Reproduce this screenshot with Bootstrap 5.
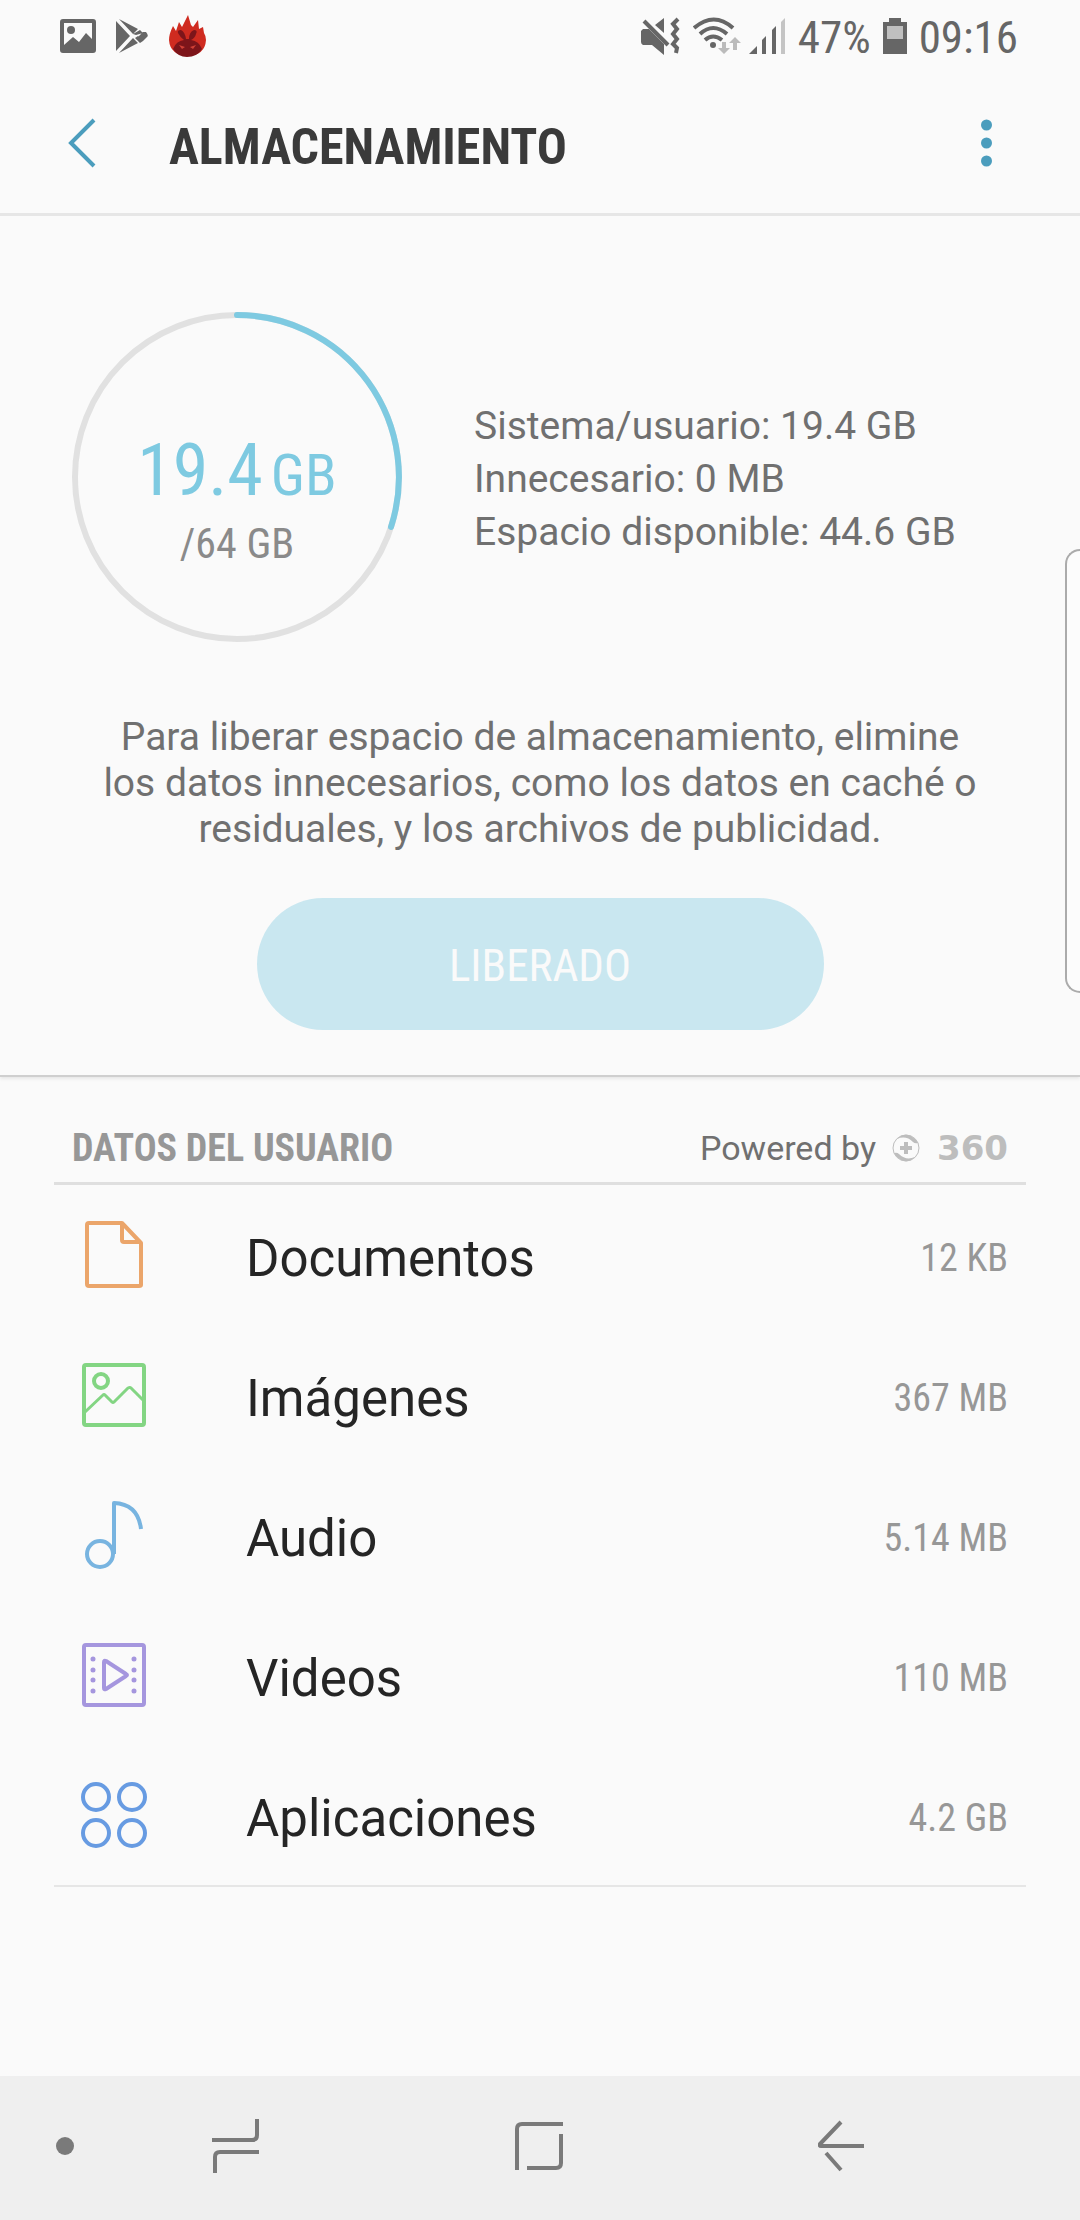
<!DOCTYPE html>
<html lang="es">
<head>
<meta charset="utf-8">
<meta name="viewport" content="width=device-width, initial-scale=1">
<title>Almacenamiento</title>
<link href="https://cdn.jsdelivr.net/npm/bootstrap@5.3.0/dist/css/bootstrap.min.css" rel="stylesheet">
<style>
  body { font-family: Roboto, "Liberation Sans", sans-serif; background: #fafafa; color: #707070; }
  .narrow { font-family: "Roboto Condensed", Roboto, "Liberation Sans", sans-serif; }
  svg { display: block; flex: none; }
  .bare { background: none; border: 0; padding: 0; }

  .statusbar { height: 72px; padding: 0 62px 0 60px; color: #666; font-size: 45px; line-height: 72px; }
  .statusbar span { padding-top: 4px; margin: 0 12px; }
  .statusbar span:last-child { margin-right: 0; }
  .notices { gap: 20px; }
  .signals { gap: 8px; }
  .topbar { height: 144px; padding: 0 88px 0 68px; border-bottom: 3px solid #e6e6e6; }
  .topbar h1 { font-size: 50px; line-height: 60px; color: #3a3a3a; margin-left: 73px; padding-top: 8px; }

  .summary { padding: 96px 72px 45px; border-bottom: 2px solid #cfcfcf; box-shadow: 0 2px 3px #e8e8e8; }
  .overview { gap: 72px; }
  .gauge { width: 330px; height: 330px; }
  .gauge-text { inset: 0; padding-top: 115px; text-align: center; }
  .used { font-size: 72px; line-height: 88px; color: #7ecae1; }
  .used-unit { font-size: 58px; margin-left: 8px; }
  .total { font-size: 42px; line-height: 50px; color: #8a8a8a; }
  .facts { font-size: 39px; line-height: 53px; padding-top: 4px; }
  .advice { font-size: 39px; line-height: 46px; margin-top: 72px; max-width: 890px; }
  .btn-free { width: 567px; height: 132px; margin-top: 46px; padding: 4px 0 0; border-radius: 66px; border: 0; font-size: 45px; }
  .btn-free:disabled { background: #c9e7f0; color: #fafafa; opacity: 1; }
  .edge-handle { right: 0; top: 333px; width: 15px; height: 444px; border: 2px solid #ababab; border-right: 0; border-radius: 22px 0 0 22px; background: #fcfcfc; }

  .userdata { margin: 0 54px; padding-top: 34px; }
  .section-head { height: 74px; padding: 2px 18px 0; border-bottom: 3px solid #dfdfdf; }
  .section-head h2 { font-size: 38px; line-height: 46px; color: #979797; }
  .powered { font-size: 34px; line-height: 40px; }
  .brand-name { font: bold 34px/40px "DejaVu Sans", sans-serif; color: #bdbdbd; width: 88px; text-align: right; }
  .category { height: 140px; padding: 0 18px 0 24px; color: #252525; font-size: 51px; line-height: 60px; }
  .category-name { margin-left: 96px; padding-top: 8px; }
  .category-size { font-size: 38px; color: #979797; padding-top: 6px; }
  .categories { border-bottom: 2px solid #e6e6e6; }

  .navkeys { height: 144px; background: #efefef; padding: 0 216px 4px 54px; gap: 136px; }
</style>
</head>
<body>
<div class="d-flex flex-column min-vh-100">

  <div class="statusbar narrow d-flex align-items-center justify-content-between">
    <div class="notices d-flex align-items-center">
      <svg width="36" height="34" viewBox="0 0 36 34"><path fill="#666" fill-rule="evenodd" d="M3 0h30q3 0 3 3v28q0 3-3 3H3q-3 0-3-3V3q0-3 3-3zm1 4v22l9-8 6 5 7-9 6 6V4z"/><circle cx="11" cy="11" r="4" fill="#666"/></svg>
      <svg width="33" height="36" viewBox="0 0 33 36"><path fill="#666" d="M0 3v30l14-15zM3 1l19 10-5 5zM3 35l19-10-5-5zM24 12l3 3-7 2-3-1zM24 25l-5-5 3-2 5 5zM27 14h3q3 4 1 5l-4 4-5-4z"/></svg>
      <svg width="37" height="42" viewBox="0 0 37 42"><path fill="#cf2b20" d="M4 11l3 5 3-9 3 5L19 0l3 10 2 2 5-7 1 9 4-2 1 6q2 3 2 7-1 15-18 16Q1 40 0 25q0-6 4-14z"/><path fill="#7d151a" d="M4 34q3-8 11-9-4-3-6-7-1-3 3-3 4 2 5 9h3q0-7 5-9 4 0 2 4-1 4-5 6 8 1 11 9-5 8-15 8-9 0-14-8z"/><path d="M10 30l6 2-3 2zM27 30l-6 2 3 2z" fill="#d14137"/></svg>
    </div>
    <div class="signals d-flex align-items-center">
      <svg class="me-1" width="40" height="38" viewBox="0 0 40 38"><path fill="#666" d="M2 12h6l15 15v11l-12-10H2q-2-1-2-3V14zM14 8l9-7v15z"/><path d="M3 4l24 24" stroke="#666" stroke-width="4"/><path d="M37 2l-5 5 4 5-4 5 4 5-4 5 4 4-1 5" fill="none" stroke="#666" stroke-width="4"/></svg>
      <svg width="48" height="38" viewBox="0 0 48 38"><g fill="none" stroke="#666" stroke-width="4"><path d="M1 11q20-17 39 0M7 17q13-12 27 0M12 23q8-7 17 0"/></g><circle cx="20" cy="28" r="3" fill="#666"/><path d="M29 25h4v6h4l-6 6-6-6h4zM40 33v-7h-4l6-6 6 6h-4v7z" fill="#bbb"/></svg>
      <div class="d-flex align-items-center">
        <svg width="37" height="36" viewBox="0 0 37 36"><path fill="#666" d="M0 36l8-8v8zM13 22l4-4v18h-4zM23 12l4-4v28h-4z"/><path fill="#c4c4c4" d="M32 4l4-4v36h-4z"/></svg>
        <span>47%</span>
        <svg width="24" height="36" viewBox="0 0 24 36"><path fill="#666" d="M6 0h12v4h6v32H0V4h6z"/><path fill="#c0c0c0" d="M4 8h16v13H4z"/></svg>
        <span>09:16</span>
      </div>
    </div>
  </div>

  <header class="topbar d-flex align-items-center">
    <button class="bare" type="button" aria-label="Atrás"><svg width="28" height="50" viewBox="0 0 28 50"><path d="M26 2L3 25l23 23" fill="none" stroke="#4b9dbd" stroke-width="4"/></svg></button>
    <h1 class="narrow fw-bold mb-0">ALMACENAMIENTO</h1>
    <button class="bare ms-auto" type="button" aria-label="Más opciones"><svg width="11" height="48" viewBox="0 0 11 48" fill="#4b9dbd"><circle cx="5.500" cy="6" r="5.500"/><circle cx="5.500" cy="24" r="5.500"/><circle cx="5.500" cy="42" r="5.500"/></svg></button>
  </header>

  <section class="summary position-relative d-flex flex-column align-items-center">
    <div class="overview d-flex align-items-center align-self-stretch">
      <div class="gauge position-relative flex-shrink-0">
        <svg width="330" height="330" viewBox="0 0 330 330" fill="none" stroke-width="6">
          <circle cx="165" cy="165" r="162" stroke="#e1e1e1"/>
          <path d="M165 3A162 162 0 0 1 319 215" stroke="#7ecae1" stroke-linecap="round"/>
        </svg>
        <div class="gauge-text narrow position-absolute">
          <div class="used">19.4<span class="used-unit">GB</span></div>
          <div class="total">/64 GB</div>
        </div>
      </div>
      <div class="facts">
        <div>Sistema/usuario: 19.4 GB</div>
        <div>Innecesario: 0 MB</div>
        <div>Espacio disponible: 44.6 GB</div>
      </div>
    </div>
    <p class="advice text-center mb-0">Para liberar espacio de almacenamiento, elimine los datos innecesarios, como los datos en caché o residuales, y los archivos de publicidad.</p>
    <button class="btn btn-free narrow" type="button" disabled>LIBERADO</button>
    <div class="edge-handle position-absolute"></div>
  </section>

  <section class="userdata">
    <div class="section-head d-flex align-items-center justify-content-between">
      <h2 class="narrow fw-bold mb-0">DATOS DEL USUARIO</h2>
      <div class="powered d-flex align-items-center">
        <span>Powered by</span>
        <svg class="ms-3" width="28" height="28" viewBox="0 0 28 28"><circle cx="14" cy="14" r="13" fill="none" stroke="#bdbdbd"/><path fill="#bdbdbd" d="M5 5Q14-4 24 6l2 3q-3 1-5-1Q14 1 5 5zM23 23Q14 32 4 22l-2-3q3-1 5 1 7 7 16 3zM12 8h4v4h4v4h-4v4h-4v-4H8v-4h4z"/></svg>
        <span class="brand-name">360</span>
      </div>
    </div>
    <nav class="categories d-flex flex-column" aria-label="Datos del usuario">
      <a href="#" class="category d-flex align-items-center text-decoration-none">
        <svg width="72" height="72" viewBox="0 0 72 72" fill="none" stroke="#eba56a" stroke-width="4" stroke-linejoin="round"><path d="M11 4h33l19 20v42q0 1-2 1H11q-2 0-2-2V6q0-2 2-2z"/><path d="M44 4v17q0 2 2 2h17"/></svg>
        <span class="category-name">Documentos</span><span class="category-size narrow ms-auto">12 KB</span>
      </a>
      <a href="#" class="category d-flex align-items-center text-decoration-none">
        <svg width="72" height="72" viewBox="0 0 72 72" fill="none" stroke="#83d583" stroke-width="4" stroke-linejoin="round"><rect x="6" y="6" width="60" height="60" rx="2"/><circle cx="23" cy="22" r="7"/><path stroke-width="3" d="M7 53l18-17q1-1 2 0l7 7q1 1 2 0l14-14q2-1 3 0l13 13"/></svg>
        <span class="category-name">Imágenes</span><span class="category-size narrow ms-auto">367 MB</span>
      </a>
      <a href="#" class="category d-flex align-items-center text-decoration-none">
        <svg width="72" height="72" viewBox="0 0 72 72" fill="none" stroke="#78b4e0" stroke-width="4" stroke-linejoin="round"><circle cx="22" cy="55" r="13"/><path d="M36 55V4q24 1 27 26"/></svg>
        <span class="category-name">Audio</span><span class="category-size narrow ms-auto">5.14 MB</span>
      </a>
      <a href="#" class="category d-flex align-items-center text-decoration-none">
        <svg width="72" height="72" viewBox="0 0 72 72" fill="none" stroke="#a596de" stroke-width="4" stroke-linejoin="round"><rect x="6" y="6" width="60" height="60" rx="2"/><path d="M26 23v26q0 2 2 1l20-13q2-1 0-2L28 22q-2-1-2 1z"/><path stroke-width="5" stroke-linecap="round" d="M15 20h.01M15 31h.01M15 41h.01M15 52h.01M56 20h.01M56 31h.01M56 41h.01M56 52h.01"/></svg>
        <span class="category-name">Videos</span><span class="category-size narrow ms-auto">110 MB</span>
      </a>
      <a href="#" class="category d-flex align-items-center text-decoration-none">
        <svg width="72" height="72" viewBox="0 0 72 72" fill="none" stroke="#679be2" stroke-width="4"><circle cx="18" cy="18" r="13"/><circle cx="54" cy="18" r="13"/><circle cx="18" cy="54" r="13"/><circle cx="54" cy="54" r="13"/></svg>
        <span class="category-name">Aplicaciones</span><span class="category-size narrow ms-auto">4.2 GB</span>
      </a>
    </nav>
  </section>

  <footer class="navkeys mt-auto d-flex align-items-center">
    <button class="bare" type="button" aria-label="Mostrar u ocultar barra"><svg width="22" height="18"><circle cx="11" cy="9" r="9" fill="#7a7a7a"/></svg></button>
    <div class="d-flex flex-grow-1 align-items-center justify-content-between">
      <button class="bare" type="button" aria-label="Recientes"><svg width="48" height="54" viewBox="0 0 48 54" fill="none" stroke="#7a7a7a" stroke-width="4"><path d="M45 0v16q0 5-5 5H0M3 54V38q0-5 5-5h39"/></svg></button>
      <button class="bare" type="button" aria-label="Inicio"><svg width="48" height="50" viewBox="0 0 48 50" fill="none" stroke="#7a7a7a" stroke-width="4"><path d="M2 49V8q0-5 5-5h41M46 13v29q0 5-5 5H12"/></svg></button>
      <button class="bare" type="button" aria-label="Volver"><svg width="46" height="52" viewBox="0 0 46 52" fill="none" stroke="#7a7a7a" stroke-width="4"><path d="M23 2L2 24q-1 2 1 2h43M8 33l15 17"/></svg></button>
    </div>
  </footer>
</div>
<script src="https://cdn.jsdelivr.net/npm/bootstrap@5.3.0/dist/js/bootstrap.bundle.min.js"></script>
</body>
</html>
